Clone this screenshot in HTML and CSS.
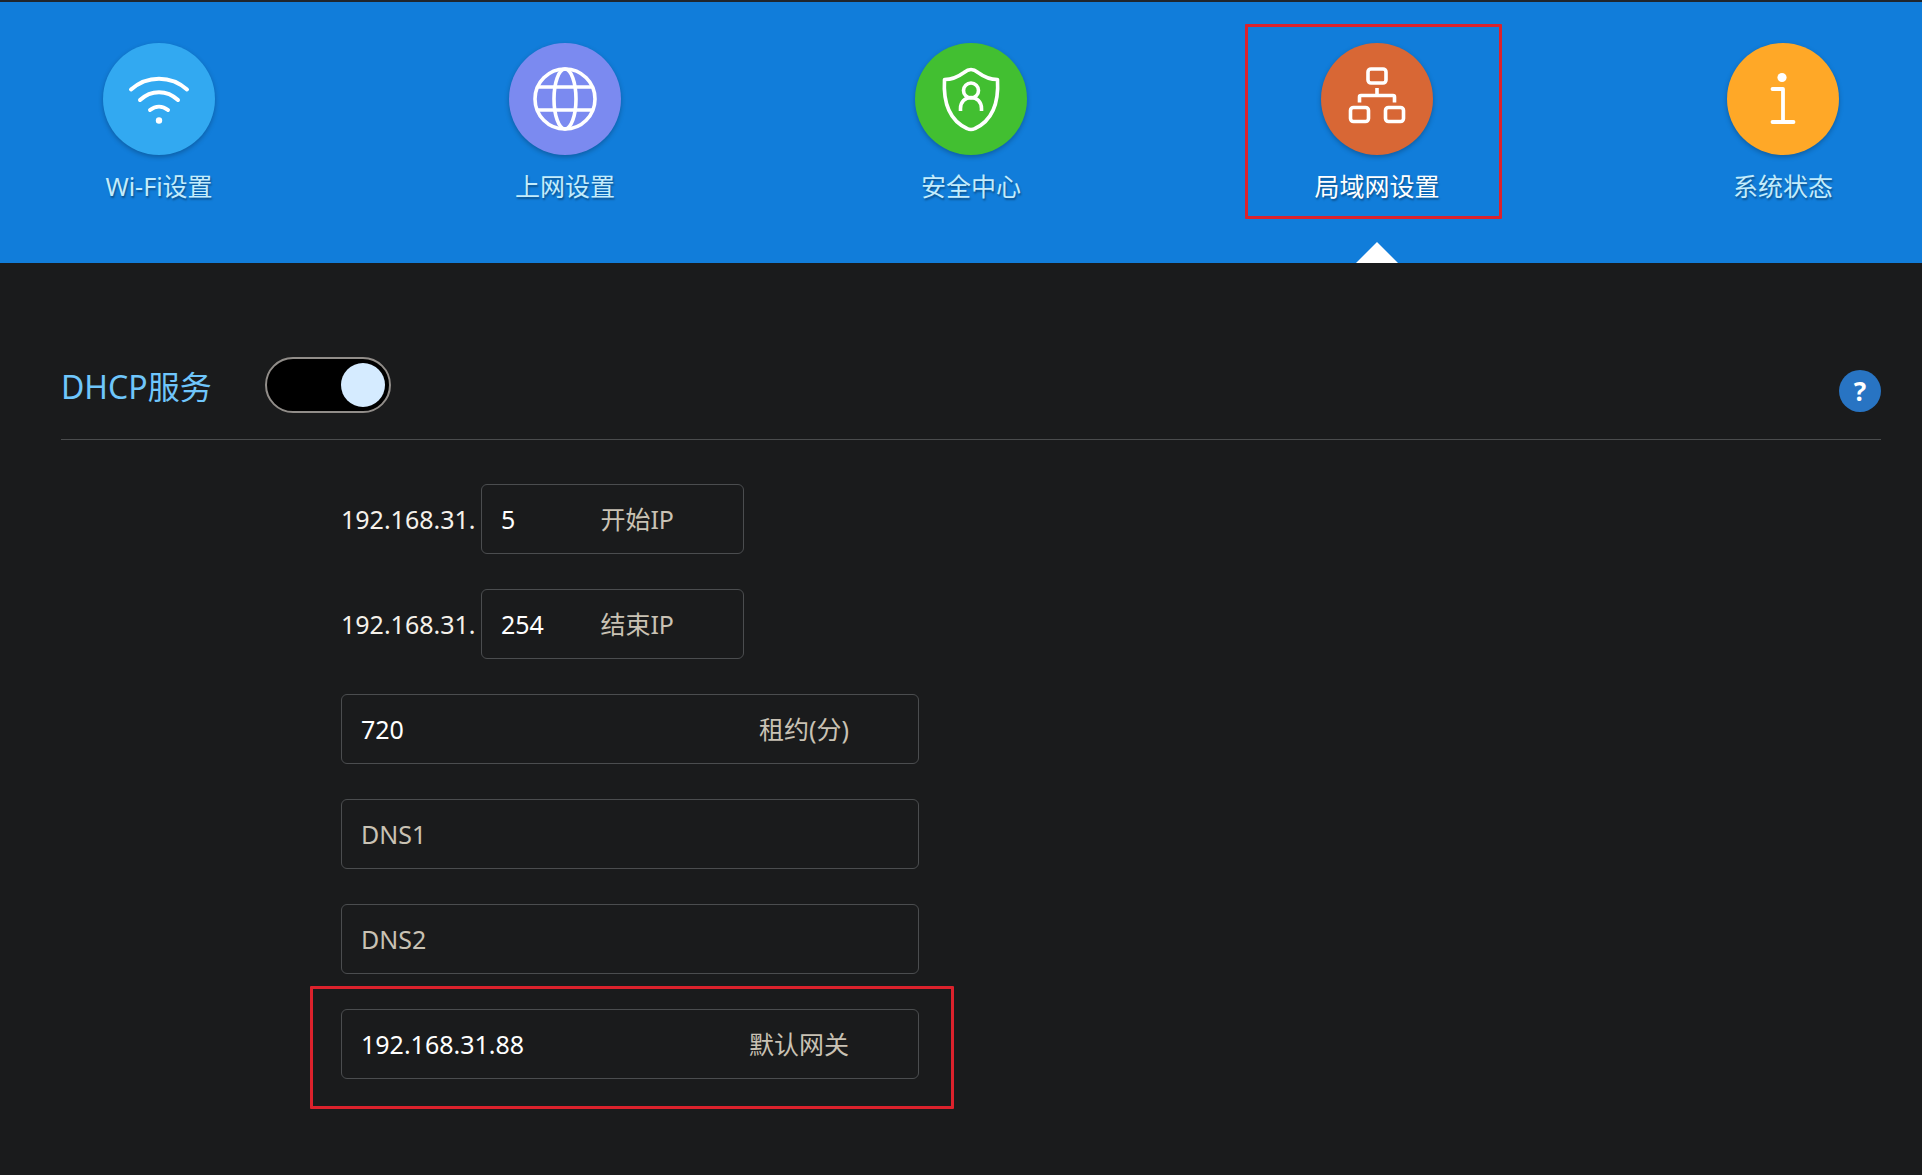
FILE: index.html
```html
<!DOCTYPE html>
<html lang="zh-CN">
<head>
<meta charset="utf-8">
<title>局域网设置</title>
<link rel="stylesheet" href="styles.css">
</head>
<body>
<header class="topbar">
  <nav class="nav">
    <a class="nav-item" href="#wifi">
      <span class="nav-icon nav-icon-wifi">
        <svg viewBox="0 0 112 112" fill="none" stroke="#fff" stroke-width="4" stroke-linecap="round">
          <path d="M28 46.500C44 32 68 32 84 46.500M37 57C48 46.500 64 46.500 75 57M47 67C52.500 62.500 59.500 62.500 65 67"/>
          <circle cx="56" cy="77.500" r="3.200" fill="#fff" stroke="none"/>
        </svg>
      </span>
      <span class="nav-label">Wi-Fi设置</span>
    </a>
    <a class="nav-item" href="#internet">
      <span class="nav-icon nav-icon-internet">
        <svg viewBox="0 0 112 112" fill="none" stroke="#fff" stroke-width="3.600">
          <circle cx="56" cy="56" r="30"/>
          <ellipse cx="56" cy="56" rx="11" ry="30"/>
          <path d="M28 44H84M28 67H84"/>
        </svg>
      </span>
      <span class="nav-label">上网设置</span>
    </a>
    <a class="nav-item" href="#security">
      <span class="nav-icon nav-icon-security">
        <svg viewBox="0 0 112 112" fill="none" stroke="#fff" stroke-width="3.600">
          <path stroke-linejoin="round" d="M56 26.500C53.500 26.500 51.500 27.500 49 29.500C43 34 37 36.500 29.500 36.500C28 61 36 78 52 85.500Q56 87.500 60 85.500C76 78 84 61 82.500 36.500C75 36.500 69 34 63 29.500C60.500 27.500 58.500 26.500 56 26.500Z"/>
          <circle cx="56" cy="47.500" r="7.500"/>
          <path d="M45.500 68V65.500C45.500 59 50 54.500 56 54.500S66.500 59 66.500 65.500V68"/>
        </svg>
      </span>
      <span class="nav-label">安全中心</span>
    </a>
    <a class="nav-item nav-item-active" href="#lan" aria-current="page">
      <span class="nav-icon nav-icon-lan">
        <svg viewBox="0 0 112 112" fill="none" stroke="#fff" stroke-width="3.600">
          <rect x="47" y="26" width="18" height="14" rx="3"/>
          <rect x="29.500" y="64.500" width="18" height="14" rx="3"/>
          <rect x="64.500" y="64.500" width="18" height="14" rx="3"/>
          <path d="M56 45V52.500M38.500 59.500V54Q38.500 52.500 40 52.500H72Q73.500 52.500 73.500 54V59.500"/>
        </svg>
      </span>
      <span class="nav-label">局域网设置</span>
    </a>
    <a class="nav-item" href="#status">
      <span class="nav-icon nav-icon-status">
        <svg viewBox="0 0 112 112" fill="none" stroke="#fff" stroke-width="3.800" stroke-linecap="round" stroke-linejoin="round">
          <circle cx="55" cy="34.500" r="4.600" fill="#fff" stroke="none"/>
          <path d="M45.500 46H56V79M45.500 79H66.500"/>
        </svg>
      </span>
      <span class="nav-label">系统状态</span>
    </a>
  </nav>
</header>

<main class="content">
  <div class="section-head">
    <label class="section-title" for="dhcp">DHCP服务</label>
    <input class="switch" type="checkbox" id="dhcp" checked>
    <button class="help" type="button" aria-label="帮助">?</button>
  </div>

  <form class="form">
    <div class="row">
      <span class="prefix">192.168.31.</span>
      <div class="field field-short">
        <input class="field-input" id="start-ip" type="text" value="5">
        <label class="field-label" for="start-ip">开始IP</label>
      </div>
    </div>
    <div class="row">
      <span class="prefix">192.168.31.</span>
      <div class="field field-short">
        <input class="field-input" id="end-ip" type="text" value="254">
        <label class="field-label" for="end-ip">结束IP</label>
      </div>
    </div>
    <div class="row">
      <div class="field">
        <input class="field-input" id="lease" type="text" value="720">
        <label class="field-label" for="lease">租约(分)</label>
      </div>
    </div>
    <div class="row">
      <div class="field">
        <input class="field-input" type="text" aria-label="DNS1" placeholder="DNS1">
      </div>
    </div>
    <div class="row">
      <div class="field">
        <input class="field-input" type="text" aria-label="DNS2" placeholder="DNS2">
      </div>
    </div>
    <div class="row row-marked">
      <div class="field">
        <input class="field-input" id="gateway" type="text" value="192.168.31.88">
        <label class="field-label" for="gateway">默认网关</label>
      </div>
    </div>
  </form>
</main>
</body>
</html>
```
FILE: styles.css
```css
* {
  box-sizing: border-box;
}

body {
  margin: 0;
  min-height: 100vh;
  background: #1a1b1c;
  color: #fff;
  font-family: "Noto Sans", "Noto Sans CJK SC", sans-serif;
  font-size: 25px;
  line-height: 36px;
}

/* Top navigation */
.topbar {
  border-top: 2px solid #20262d;
  background: #117dda;
}

.nav {
  display: flex;
  justify-content: space-between;
  padding: 41px 77px 0 97px;
}

.nav-item {
  position: relative;
  display: flex;
  flex-direction: column;
  align-items: center;
  gap: 13px;
  width: 124px;
  height: 220px;
  color: #c3ecfc;
  text-decoration: none;
  text-shadow: 1px 2px 2px rgba(0, 0, 0, 0.35);
  white-space: nowrap;
}

.nav-item-active {
  color: #fff;
}

.nav-icon {
  width: 112px;
  height: 112px;
  border-radius: 50%;
  box-shadow: 0 2px 5px rgba(0, 0, 0, 0.25);
}

.nav-icon svg {
  display: block;
}

.nav-icon-wifi {
  background: #32a9f1;
}

.nav-icon-internet {
  background: #7b8af0;
}

.nav-icon-security {
  background: #42bf31;
}

.nav-icon-lan {
  background: #d86735;
}

.nav-icon-status {
  background: #ffa827;
}

/* Pointer under the active tab */
.nav-item-active::after {
  content: "";
  position: absolute;
  bottom: 0;
  left: 50%;
  margin-left: -21px;
  border: 21px solid transparent;
  border-top: 0;
  border-bottom-color: #fff;
}

/* Red callout frames */
.nav-item-active::before,
.row-marked::before {
  content: "";
  position: absolute;
  border: 3px solid #dc222c;
  border-radius: 1px;
  pointer-events: none;
}

.nav-item-active::before {
  inset: -19px -63px 44px -70px;
}

.row-marked::before {
  inset: -23px -35px -30px -31px;
}

/* Section heading */
.content {
  padding: 91px 41px 96px 61px;
}

.section-head {
  display: flex;
  align-items: center;
  height: 86px;
  padding-bottom: 24px;
  border-bottom: 1px solid #4a4c4d;
}

.section-title {
  width: 204px;
  padding-top: 4px;
  color: #6fc6fb;
  font-size: 32px;
}

.switch {
  appearance: none;
  display: flex;
  align-items: center;
  width: 126px;
  height: 56px;
  margin: 0;
  padding: 0 4px;
  border: 2px solid #918d89;
  border-radius: 28px;
  background: #000;
}

.switch::before {
  content: "";
  width: 44px;
  height: 44px;
  border-radius: 50%;
  background: #d5ebff;
}

.switch:checked {
  justify-content: flex-end;
}

.help {
  align-self: flex-end;
  width: 42px;
  height: 42px;
  margin: 0 0 3px auto;
  padding: 0;
  border: 0;
  border-radius: 50%;
  background: #2874c3;
  color: #fff;
  font: bold 26px/42px "Noto Sans", sans-serif;
}

/* DHCP form */
.form {
  display: flex;
  flex-direction: column;
  gap: 35px;
  width: 578px;
  margin: 44px 0 0 280px;
}

.row {
  position: relative;
  display: flex;
  align-items: center;
}

.prefix {
  width: 140px;
  color: #f5f1ea;
}

.field {
  display: flex;
  align-items: center;
  width: 100%;
  height: 70px;
  padding: 0 69px 0 19px;
  border: 1px solid #4b4d4f;
  border-radius: 6px;
}

.field-short {
  width: 263px;
}

.field-input {
  flex: 1;
  min-width: 0;
  padding: 0;
  border: 0;
  outline: 0;
  background: transparent;
  color: #fff;
  font: inherit;
}

.field-input::placeholder,
.field-label {
  color: #c9c2b4;
  opacity: 1;
}
```
